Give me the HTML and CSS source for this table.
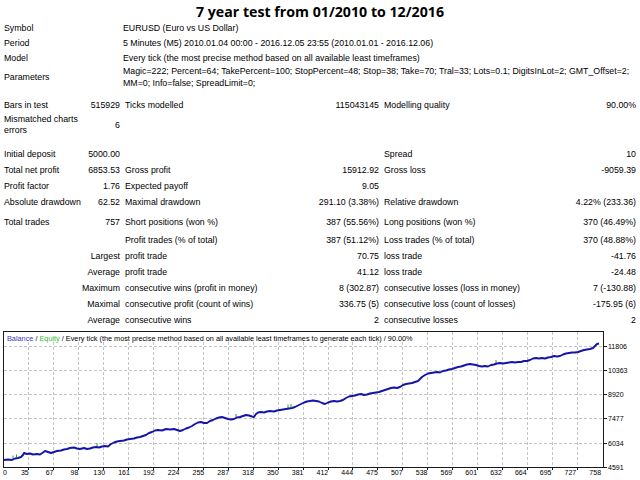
FILE: index.html
```html
<!DOCTYPE html>
<html>
<head>
<meta charset="utf-8">
<title>Strategy Tester Report</title>
<link rel="stylesheet" href="styles.css">
</head>
<body>
<h1 class="title">7 year test from 01/2010 to 12/2016</h1>
<div class="report">
  <div class="row h15"><div class="lab">Symbol</div><div class="wide">EURUSD (Euro vs US Dollar)</div></div>
  <div class="row h15"><div class="lab">Period</div><div class="wide">5 Minutes (M5) 2010.01.04 00:00 - 2016.12.05 23:55 (2010.01.01 - 2016.12.06)</div></div>
  <div class="row h15"><div class="lab">Model</div><div class="wide">Every tick (the most precise method based on all available least timeframes)</div></div>
  <div class="row h24"><div class="lab">Parameters</div><div class="wide lines">Magic=222; Percent=64; TakePercent=100; StopPercent=48; Stop=38; Take=70; Tral=33; Lots=0.1; DigitsInLot=2; GMT_Offset=2;<br>MM=0; Info=false; SpreadLimit=0;</div></div>

  <div class="row mt8"><div class="lab">Bars in test</div><div class="num">515929</div><div class="c3">Ticks modelled</div><div class="num">115043145</div><div class="c5">Modelling quality</div><div class="num">90.00%</div></div>
  <div class="row h24"><div class="lab lines">Mismatched charts errors</div><div class="num">6</div></div>

  <div class="row mt9"><div class="lab">Initial deposit</div><div class="num">5000.00</div><div class="c3"></div><div class="num"></div><div class="c5">Spread</div><div class="num">10</div></div>
  <div class="row"><div class="lab">Total net profit</div><div class="num">6853.53</div><div class="c3">Gross profit</div><div class="num">15912.92</div><div class="c5">Gross loss</div><div class="num">-9059.39</div></div>
  <div class="row"><div class="lab">Profit factor</div><div class="num">1.76</div><div class="c3">Expected payoff</div><div class="num">9.05</div><div class="c5"></div><div class="num"></div></div>
  <div class="row"><div class="lab">Absolute drawdown</div><div class="num">62.52</div><div class="c3">Maximal drawdown</div><div class="num">291.10 (3.38%)</div><div class="c5">Relative drawdown</div><div class="num">4.22% (233.36)</div></div>

  <div class="row mt4"><div class="lab">Total trades</div><div class="num">757</div><div class="c3">Short positions (won %)</div><div class="num">387 (55.56%)</div><div class="c5">Long positions (won %)</div><div class="num">370 (46.49%)</div></div>
  <div class="row mt2"><div class="pre"></div><div class="c3">Profit trades (% of total)</div><div class="num">387 (51.12%)</div><div class="c5">Loss trades (% of total)</div><div class="num">370 (48.88%)</div></div>
  <div class="row"><div class="pre">Largest</div><div class="c3">profit trade</div><div class="num">70.75</div><div class="c5">loss trade</div><div class="num">-41.76</div></div>
  <div class="row"><div class="pre">Average</div><div class="c3">profit trade</div><div class="num">41.12</div><div class="c5">loss trade</div><div class="num">-24.48</div></div>
  <div class="row"><div class="pre">Maximum</div><div class="c3">consecutive wins (profit in money)</div><div class="num">8 (302.87)</div><div class="c5">consecutive losses (loss in money)</div><div class="num">7 (-130.88)</div></div>
  <div class="row"><div class="pre">Maximal</div><div class="c3">consecutive profit (count of wins)</div><div class="num">336.75 (5)</div><div class="c5">consecutive loss (count of losses)</div><div class="num">-175.95 (6)</div></div>
  <div class="row"><div class="pre">Average</div><div class="c3">consecutive wins</div><div class="num">2</div><div class="c5">consecutive losses</div><div class="num">2</div></div>
</div>

<svg class="chart" width="640" height="152" viewBox="0 328 640 152" xmlns="http://www.w3.org/2000/svg">
  <rect class="frame" x="3.5" y="331.5" width="600" height="136"/>
  <path class="grid" d="M4 346.5H603M4 370.5H603M4 394.5H603M4 418.5H603M4 443.5H603"/>
  <path class="grid" d="M28.5 332V467M53.5 332V467M78.5 332V467M103.5 332V467M128.5 332V467M153.5 332V467M178.5 332V467M203.5 332V467M228.5 332V467M253.5 332V467M278.5 332V467M303.5 332V467M328.5 332V467M352.5 332V467M377.5 332V467M402.5 332V467M427.5 332V467M452.5 332V467M477.5 332V467M502.5 332V467M527.5 332V467M552.5 332V467M577.5 332V467"/>
  <path class="tick" d="M604 346.5h3M604 370.5h3M604 394.5h3M604 418.5h3M604 443.5h3M604 467.5h3M28.5 468v2M53.5 468v2M78.5 468v2M103.5 468v2M128.5 468v2M153.5 468v2M178.5 468v2M203.5 468v2M228.5 468v2M253.5 468v2M278.5 468v2M303.5 468v2M328.5 468v2M352.5 468v2M377.5 468v2M402.5 468v2M427.5 468v2M452.5 468v2M477.5 468v2M502.5 468v2M527.5 468v2M552.5 468v2M577.5 468v2"/>
  <rect class="legend-bg" x="4" y="332" width="414" height="10"/>
  <text class="legend" x="7" y="340.5"><tspan class="bal">Balance</tspan> / <tspan class="eq">Equity</tspan> / Every tick (the most precise method based on all available least timeframes to generate each tick) / 90.00%</text>

  <path class="equity" d="M13 455.5v4M16.5 454.5v4M97 443v4M236 414v4M288 404.5v4M291 404v3M496 360v4"/>
  <polyline class="balance" points="4,460 8,459.5 12,460 15,458.5 18,458 21,457 23,455 24,453 27,454 30,453.5 33,454.5 37,454 40,454.5 43,452.5 45,451 48,452 51,453 54,452 57,451 61,450.5 64,449.5 67,449 70,448 74,447.5 77,448.5 80,449 84,448 87,449 90,448.5 93,447.5 96,447 99,447.5 102,446.5 105,446 108,446.5 111,444 114,442.5 117,441.5 120,441 124,440.5 127,439.5 130,439 134,438.5 137,437.5 140,437 143,436 146,435 149,433 152,432 155,430.5 158,430 162,430.5 166,429 170,429.5 174,429 177,430 180,431 183,430 186,428.5 189,427.5 192,426 195,424 198,422.5 201,422 204,423 207,423 210,421 213,420 216,418.5 219,417.5 222,417 225,418 228,419 231,419.5 234,419 237,417.5 240,417 243,416 246,415 249,415.5 252,416.5 254,417 256,414 258,412.5 261,412 264,412.5 267,411.5 270,411 274,411.5 277,410.5 280,410 283,409.5 286,409 289,408.5 292,408 295,407 298,405.5 301,404 304,402.5 307,401.5 310,401 313,400.5 316,401 319,401.5 322,403 325,404 328,402.5 331,401.5 334,401 337,401.5 340,401 343,400 346,398 349,396.5 352,396 355,395.5 358,394.5 361,394 364,395 367,394.5 370,393.5 373,393 376,392.5 379,392 382,391 385,390 388,389 391,388 394,387.5 397,388 400,387 403,385 406,384 409,383.5 412,383 415,382 418,381 420,379 422,377 425,375 428,373.5 431,373 434,372.5 437,372 440,372.5 443,371 446,370.5 449,369.5 452,369 455,368 458,367 461,366.5 464,365.5 467,364.5 470,364 473,364.5 476,365 479,366 482,366.5 485,366 488,366.5 491,365 494,364.5 497,363.5 500,363 503,363.5 506,363 509,362.5 512,362 515,362.5 518,362 521,362 524,361 527,361 530,360 533,358.5 536,358 539,358.5 542,358 545,358.5 548,357.5 551,357 554,356 557,356.5 560,356 563,354.5 566,353.5 569,353 572,352.5 575,352.5 578,352 581,351 584,350 587,349.5 590,349 593,348 595,346 597,344 599,343.5"/>

  <g class="axis">
    <text x="608" y="349">11806</text>
    <text x="608" y="373">10363</text>
    <text x="608" y="397">8920</text>
    <text x="608" y="421">7477</text>
    <text x="608" y="446">6034</text>
    <text x="608" y="470">4591</text>
  </g>
  <g class="axis xlab">
    <text x="5" y="475">0</text>
    <text x="24.8" y="475">35</text>
    <text x="49.6" y="475">67</text>
    <text x="74.4" y="475">98</text>
    <text x="99.2" y="475">130</text>
    <text x="124" y="475">161</text>
    <text x="148.8" y="475">192</text>
    <text x="173.6" y="475">224</text>
    <text x="198.4" y="475">255</text>
    <text x="223.2" y="475">287</text>
    <text x="248" y="475">318</text>
    <text x="272.8" y="475">350</text>
    <text x="297.6" y="475">381</text>
    <text x="322.4" y="475">412</text>
    <text x="347.2" y="475">444</text>
    <text x="372" y="475">475</text>
    <text x="396.8" y="475">507</text>
    <text x="421.6" y="475">538</text>
    <text x="446.4" y="475">569</text>
    <text x="471.2" y="475">601</text>
    <text x="496" y="475">632</text>
    <text x="520.8" y="475">664</text>
    <text x="545.6" y="475">695</text>
    <text x="570.4" y="475">727</text>
    <text x="595.2" y="475">758</text>
  </g>
</svg>
</body>
</html>
```

FILE: styles.css
```css
html, body {
  margin: 0;
  padding: 0;
  background: #ffffff;
}

body {
  width: 640px;
  height: 480px;
  overflow: hidden;
  font-family: "Liberation Sans", Arial, sans-serif;
  font-size: 8.8px;
  color: #000000;
}

.title {
  margin: 0;
  height: 20px;
  font-family: "Open Sans", "Liberation Sans", sans-serif;
  font-weight: 700;
  font-size: 14.2px;
  line-height: 23px;
  text-align: center;
  color: #000000;
}

.report {
  padding: 0 4px;
}

.row {
  display: grid;
  grid-template-columns: 79px 37px 175px 84px 173px 84px;
  align-items: center;
  height: 16px;
  line-height: 10px;
  white-space: nowrap;
}

.h15 { height: 15px; }
.h24 { height: 24px; }
.mt2 { margin-top: 2px; }
.mt4 { margin-top: 4px; }
.mt8 { margin-top: 8px; }
.mt9 { margin-top: 9px; }

.lab {
  grid-column: 1;
}

.lines {
  line-height: 11.5px;
}

.lab.lines {
  width: 76px;
  white-space: normal;
}

.wide {
  grid-column: 3 / 7;
  padding-left: 3px;
}

.wide.lines {
  line-height: 12px;
}

.num {
  text-align: right;
}

.c3,
.c5 {
  padding-left: 5px;
}

.pre {
  grid-column: 1 / 3;
  text-align: right;
}

.chart {
  display: block;
}

.frame {
  fill: #ffffff;
  stroke: #1a1a1a;
  stroke-width: 1;
}

.grid {
  fill: none;
  stroke: #c4c4c4;
  stroke-width: 1;
  stroke-dasharray: 3 2;
}

.tick {
  fill: none;
  stroke: #1a1a1a;
  stroke-width: 1;
}

.legend-bg {
  fill: #ffffff;
}

.legend {
  font-family: "Liberation Sans", Arial, sans-serif;
  font-size: 7.3px;
  fill: #000000;
}

.bal { fill: #3838c0; }
.eq { fill: #30c030; }

.balance {
  fill: none;
  stroke: #1414a8;
  stroke-width: 1.9;
  stroke-linejoin: round;
}

.equity {
  fill: none;
  stroke: #2aa02a;
  stroke-width: 1;
}

.axis text {
  font-family: "Liberation Sans", Arial, sans-serif;
  font-size: 7px;
  fill: #000000;
}

.xlab text {
  text-anchor: middle;
}

.xlab text:first-child {
  text-anchor: start;
  transform: translateX(-2px);
}
```
